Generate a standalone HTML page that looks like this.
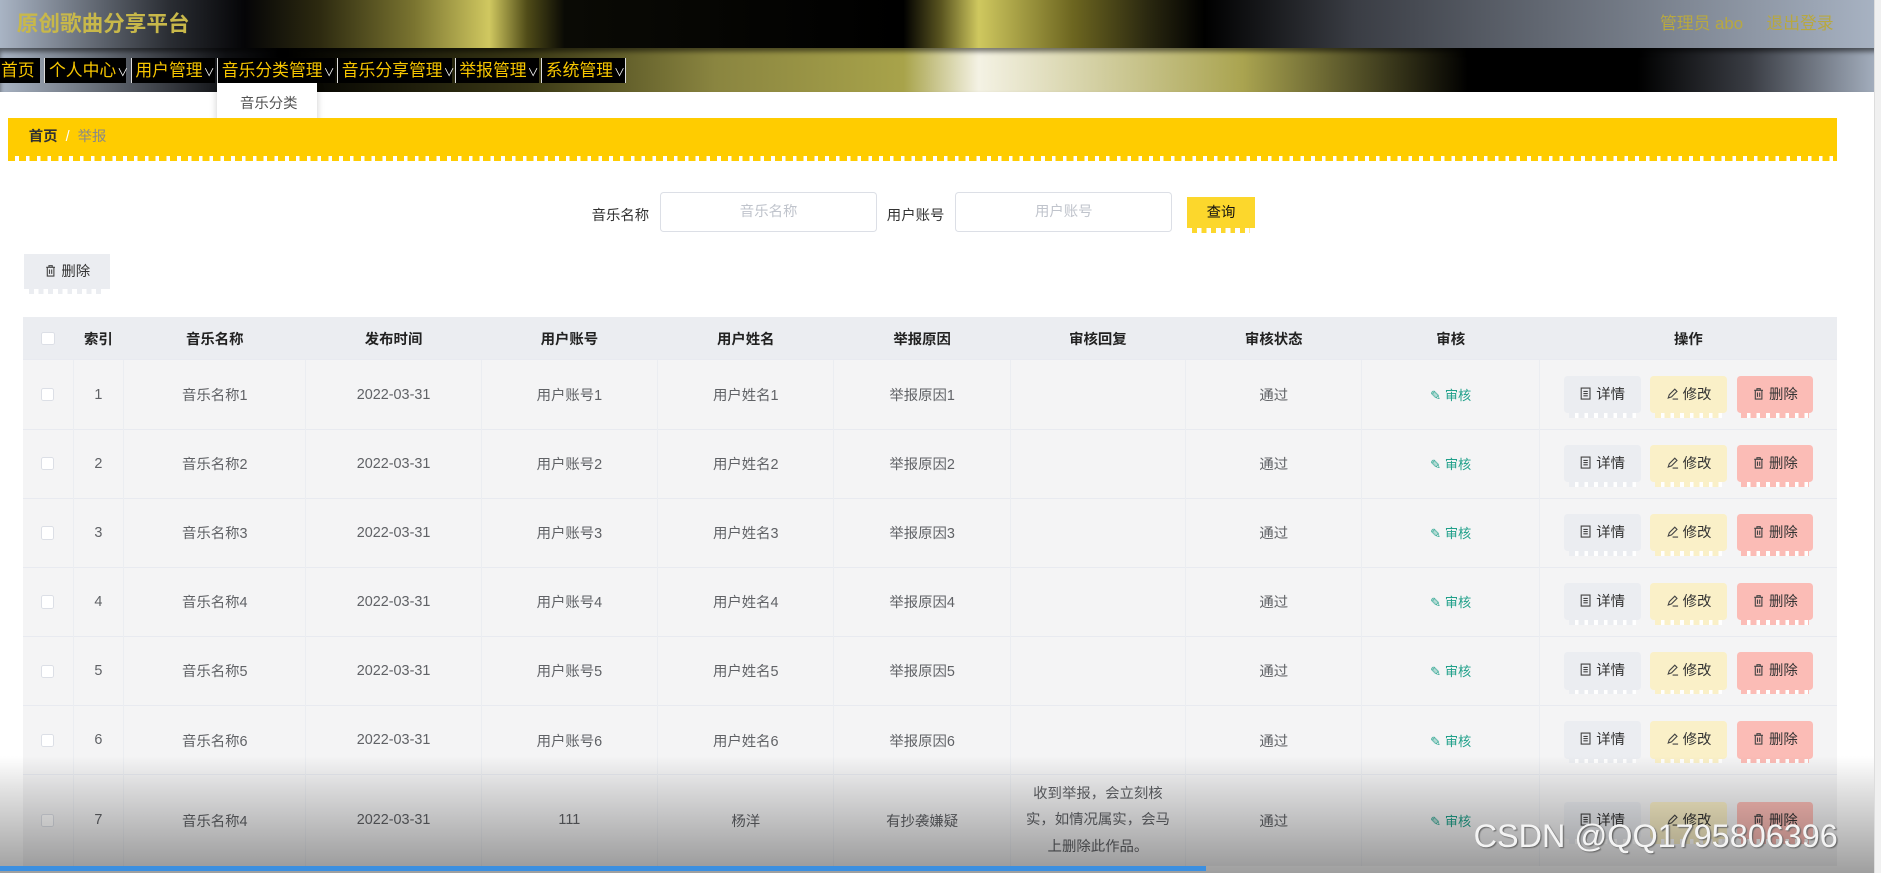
<!DOCTYPE html>
<html><head><meta charset="utf-8"><style>
*{box-sizing:border-box;margin:0;padding:0}
html,body{width:1881px;height:873px;overflow:hidden;background:#fff}
#w{zoom:1.2;width:1568px;height:728px;position:relative;font-family:"Liberation Sans","Noto Sans CJK SC",sans-serif;color:#606266}
.hd{position:absolute;left:0;top:0;width:1568px;height:40px;background:linear-gradient(90deg,#a9b4c4 0%,#2a2d33 9%,#050507 13%,#2d2a10 17%,#7a7430 22%,#d0c860 26%,#504c18 28%,#0a0a05 30%,#000 48%,#5a5520 50%,#cfc85f 52%,#6d6620 57%,#2a2810 61%,#000 64%,#3a3d44 72%,#a9b4c4 100%)}
.title{position:absolute;left:14px;top:6px;font-size:18px;font-weight:bold;color:#c8b84a}
.user{position:absolute;right:40px;top:8px;font-size:14px;color:#b8a840}
.nav{position:absolute;left:0;top:40px;width:1568px;height:37px;background:linear-gradient(90deg,#a9b4c4 0%,#101114 12%,#000 15%,#3a3815 28%,#8a8540 38%,#a8a34a 48%,#f4f2e4 52%,#aaa450 66%,#000 78%,#000 87%,#3a3d44 93%,#a9b4c4 100%);box-shadow:inset 0 3px 4px rgba(0,0,0,.5)}
.ni{position:absolute;top:8px;height:21px;background:#000;color:#f7c600;font-size:14px;line-height:21px;border-left:1px solid #ddd;padding-left:3px;white-space:nowrap}
.ni small{font-size:9px;color:#fff;margin-left:1px}
.dd{position:absolute;left:181px;top:69px;width:83px;height:34px;background:#fff;box-shadow:0 2px 6px rgba(0,0,0,.2);font-size:12px;line-height:36px;padding-left:19px;color:#555}
.bc{position:absolute;left:7px;top:98px;width:1524px;height:32px;background:#fc0;font-size:12px;line-height:32px;padding-left:17px;color:#888}
.bc b{color:#303133}
.bc:after{content:"";position:absolute;left:0;bottom:-4px;width:100%;height:4px;background:repeating-linear-gradient(90deg,#fc0 0 6px,#fff 6px 9px)}
.lab{position:absolute;top:170px;font-size:12px;color:#333}
.inp{position:absolute;top:160px;width:181px;height:33px;border:1px solid #dcdfe6;border-radius:3px;text-align:center;line-height:33px;font-size:12px;color:#c0c4cc}
.q{position:absolute;left:989px;top:164px;width:57px;height:26px;background:#fcd72c;font-size:12px;text-align:center;line-height:28px;color:#111}
.q:after,.db:after,.bt:after{content:"";position:absolute;left:4px;right:4px;bottom:-4px;height:4px}
.q:after{background:repeating-linear-gradient(90deg,#fcd72c 0 4px,#fff 4px 8px)}
.db{position:absolute;left:20px;top:212px;width:72px;height:29px;background:#ebedf1;font-size:12px;line-height:31px;text-align:center;color:#333}
.db:after{background:repeating-linear-gradient(90deg,#ebedf1 0 4px,#fff 4px 8px)}
table{position:absolute;left:19px;top:264px;width:1512px;border-collapse:collapse;font-size:12px}
th{background:#ebedf1;height:36px;color:#222;font-weight:bold;text-align:center}
td{background:#f4f4f5;height:57.6px;text-align:center;border-top:1px solid #e8eaf0;border-left:1px solid #ebedf1;color:#606266}
td:first-child{border-left:0}
.cb{display:inline-block;width:11px;height:11px;border:1px solid #dcdfe6;background:#fff;border-radius:2px;vertical-align:middle}
.sh{color:#20a08a;font-size:11px}
.bt{position:relative;display:inline-block;width:64px;height:31px;line-height:32px;margin:0 4px;font-size:12px;color:#333;border-radius:3px}
.bt svg{vertical-align:-1px;margin-right:3px}
.b1{background:#ebedf1}.b2{background:#faf0c8}.b3{background:#fbbcb6}
.b1:after{background:repeating-linear-gradient(90deg,#ebedf1 0 5px,#fff 5px 8px)}
.b2:after{background:repeating-linear-gradient(90deg,#faf0c8 0 5px,#fff 5px 8px)}
.b3:after{background:repeating-linear-gradient(90deg,#fbbcb6 0 5px,#fff 5px 8px)}
.ov{position:absolute;left:0;top:630px;width:1568px;height:98px;background:linear-gradient(180deg,rgba(0,0,0,0),rgba(0,0,0,.12) 30%,rgba(0,0,0,.38))}
.wm{position:absolute;left:1228px;top:682px;font-size:27px;color:#f4f4f4;text-shadow:1px 1px 1px #666;white-space:nowrap}
.sb{position:absolute;left:0;top:722px;width:1005px;height:4px;background:#3b8fe0}
.vs{position:absolute;left:1562px;top:0;width:6px;height:728px;background:#f0f0f0;border-left:1px solid #ddd}
</style></head><body><div id="w">
<div class="hd"><div class="title">原创歌曲分享平台</div><div class="user">管理员 abo &nbsp;&nbsp;&nbsp; 退出登录</div></div>
<div class="nav">
<div class="ni" style="left:-3px;width:36px">首页</div>
<div class="ni" style="left:37px;width:68px">个人中心<small>∨</small></div>
<div class="ni" style="left:109px;width:70px">用户管理<small>∨</small></div>
<div class="ni" style="left:181px;width:98px">音乐分类管理<small>∨</small></div>
<div class="ni" style="left:281px;width:96px">音乐分享管理<small>∨</small></div>
<div class="ni" style="left:379px;width:70px">举报管理<small>∨</small></div>
<div class="ni" style="left:451px;width:71px;border-right:1px solid #ddd">系统管理<small>∨</small></div>
</div>
<div class="dd">音乐分类</div>
<div class="bc"><b>首页</b> &nbsp;<span style="color:#fff">/</span>&nbsp; 举报</div>
<div class="lab" style="left:493px">音乐名称</div><div class="inp" style="left:550px">音乐名称</div>
<div class="lab" style="left:739px">用户账号</div><div class="inp" style="left:796px">用户账号</div>
<div class="q">查询</div>
<div class="db"><svg width="11" height="11" viewBox="0 0 12 12" style="vertical-align:-1px"><path d="M2 3h8M4.5 3V1.5h3V3M3 3v8h6V3M5 5v4M7 5v4" fill="none" stroke="#444" stroke-width="1"/></svg> 删除</div>
<table>
<colgroup><col style="width:42px"><col style="width:42px"><col style="width:152px"><col style="width:146px"><col style="width:147px"><col style="width:147px"><col style="width:147px"><col style="width:146px"><col style="width:147px"><col style="width:148px"><col style="width:248px"></colgroup>
<tr><th><span class="cb"></span></th><th>索引</th><th>音乐名称</th><th>发布时间</th><th>用户账号</th><th>用户姓名</th><th>举报原因</th><th>审核回复</th><th>审核状态</th><th>审核</th><th>操作</th></tr>
<!--ROWS-->
<tr><td><span class="cb"></span></td><td>1</td><td>音乐名称1</td><td>2022-03-31</td><td>用户账号1</td><td>用户姓名1</td><td>举报原因1</td><td></td><td>通过</td><td class="sh">✎ 审核</td><td><span class="bt b1"><svg width="11" height="11" viewBox="0 0 12 12"><path d="M2 1h8v10H2zM4 4h4M4 6h4M4 8h4" fill="none" stroke="#444"/></svg>详情</span><span class="bt b2"><svg width="11" height="11" viewBox="0 0 12 12"><path d="M2 10l1-3 5-5 2 2-5 5zM6 11h5" fill="none" stroke="#444"/></svg>修改</span><span class="bt b3"><svg width="11" height="11" viewBox="0 0 12 12"><path d="M2 3h8M4.5 3V1.5h3V3M3 3v8h6V3M5 5v4M7 5v4" fill="none" stroke="#444"/></svg>删除</span></td></tr>
<tr><td><span class="cb"></span></td><td>2</td><td>音乐名称2</td><td>2022-03-31</td><td>用户账号2</td><td>用户姓名2</td><td>举报原因2</td><td></td><td>通过</td><td class="sh">✎ 审核</td><td><span class="bt b1"><svg width="11" height="11" viewBox="0 0 12 12"><path d="M2 1h8v10H2zM4 4h4M4 6h4M4 8h4" fill="none" stroke="#444"/></svg>详情</span><span class="bt b2"><svg width="11" height="11" viewBox="0 0 12 12"><path d="M2 10l1-3 5-5 2 2-5 5zM6 11h5" fill="none" stroke="#444"/></svg>修改</span><span class="bt b3"><svg width="11" height="11" viewBox="0 0 12 12"><path d="M2 3h8M4.5 3V1.5h3V3M3 3v8h6V3M5 5v4M7 5v4" fill="none" stroke="#444"/></svg>删除</span></td></tr>
<tr><td><span class="cb"></span></td><td>3</td><td>音乐名称3</td><td>2022-03-31</td><td>用户账号3</td><td>用户姓名3</td><td>举报原因3</td><td></td><td>通过</td><td class="sh">✎ 审核</td><td><span class="bt b1"><svg width="11" height="11" viewBox="0 0 12 12"><path d="M2 1h8v10H2zM4 4h4M4 6h4M4 8h4" fill="none" stroke="#444"/></svg>详情</span><span class="bt b2"><svg width="11" height="11" viewBox="0 0 12 12"><path d="M2 10l1-3 5-5 2 2-5 5zM6 11h5" fill="none" stroke="#444"/></svg>修改</span><span class="bt b3"><svg width="11" height="11" viewBox="0 0 12 12"><path d="M2 3h8M4.5 3V1.5h3V3M3 3v8h6V3M5 5v4M7 5v4" fill="none" stroke="#444"/></svg>删除</span></td></tr>
<tr><td><span class="cb"></span></td><td>4</td><td>音乐名称4</td><td>2022-03-31</td><td>用户账号4</td><td>用户姓名4</td><td>举报原因4</td><td></td><td>通过</td><td class="sh">✎ 审核</td><td><span class="bt b1"><svg width="11" height="11" viewBox="0 0 12 12"><path d="M2 1h8v10H2zM4 4h4M4 6h4M4 8h4" fill="none" stroke="#444"/></svg>详情</span><span class="bt b2"><svg width="11" height="11" viewBox="0 0 12 12"><path d="M2 10l1-3 5-5 2 2-5 5zM6 11h5" fill="none" stroke="#444"/></svg>修改</span><span class="bt b3"><svg width="11" height="11" viewBox="0 0 12 12"><path d="M2 3h8M4.5 3V1.5h3V3M3 3v8h6V3M5 5v4M7 5v4" fill="none" stroke="#444"/></svg>删除</span></td></tr>
<tr><td><span class="cb"></span></td><td>5</td><td>音乐名称5</td><td>2022-03-31</td><td>用户账号5</td><td>用户姓名5</td><td>举报原因5</td><td></td><td>通过</td><td class="sh">✎ 审核</td><td><span class="bt b1"><svg width="11" height="11" viewBox="0 0 12 12"><path d="M2 1h8v10H2zM4 4h4M4 6h4M4 8h4" fill="none" stroke="#444"/></svg>详情</span><span class="bt b2"><svg width="11" height="11" viewBox="0 0 12 12"><path d="M2 10l1-3 5-5 2 2-5 5zM6 11h5" fill="none" stroke="#444"/></svg>修改</span><span class="bt b3"><svg width="11" height="11" viewBox="0 0 12 12"><path d="M2 3h8M4.5 3V1.5h3V3M3 3v8h6V3M5 5v4M7 5v4" fill="none" stroke="#444"/></svg>删除</span></td></tr>
<tr><td><span class="cb"></span></td><td>6</td><td>音乐名称6</td><td>2022-03-31</td><td>用户账号6</td><td>用户姓名6</td><td>举报原因6</td><td></td><td>通过</td><td class="sh">✎ 审核</td><td><span class="bt b1"><svg width="11" height="11" viewBox="0 0 12 12"><path d="M2 1h8v10H2zM4 4h4M4 6h4M4 8h4" fill="none" stroke="#444"/></svg>详情</span><span class="bt b2"><svg width="11" height="11" viewBox="0 0 12 12"><path d="M2 10l1-3 5-5 2 2-5 5zM6 11h5" fill="none" stroke="#444"/></svg>修改</span><span class="bt b3"><svg width="11" height="11" viewBox="0 0 12 12"><path d="M2 3h8M4.5 3V1.5h3V3M3 3v8h6V3M5 5v4M7 5v4" fill="none" stroke="#444"/></svg>删除</span></td></tr>
<tr><td style="height:76px"><span class="cb"></span></td><td>7</td><td>音乐名称4</td><td>2022-03-31</td><td>111</td><td>杨洋</td><td>有抄袭嫌疑</td><td style="line-height:22px;padding:0 8px">收到举报，会立刻核实，如情况属实，会马上删除此作品。</td><td>通过</td><td class="sh">✎ 审核</td><td><span class="bt b1"><svg width="11" height="11" viewBox="0 0 12 12"><path d="M2 1h8v10H2zM4 4h4M4 6h4M4 8h4" fill="none" stroke="#444"/></svg>详情</span><span class="bt b2"><svg width="11" height="11" viewBox="0 0 12 12"><path d="M2 10l1-3 5-5 2 2-5 5zM6 11h5" fill="none" stroke="#444"/></svg>修改</span><span class="bt b3"><svg width="11" height="11" viewBox="0 0 12 12"><path d="M2 3h8M4.5 3V1.5h3V3M3 3v8h6V3M5 5v4M7 5v4" fill="none" stroke="#444"/></svg>删除</span></td></tr>
</table>
<div class="ov"></div>
<div class="wm">CSDN @QQ1795806396</div>
<div class="sb"></div>
<div class="vs"></div>
</div></body></html>
